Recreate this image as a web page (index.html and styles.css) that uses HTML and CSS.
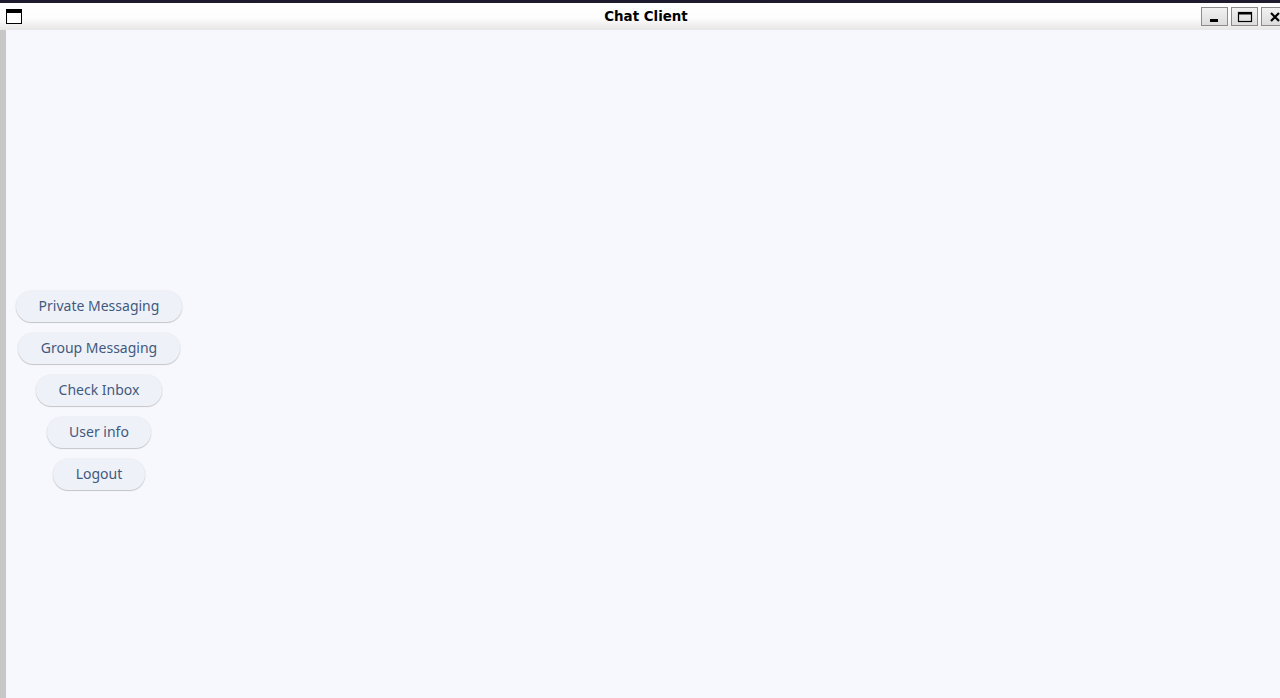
FILE: index.html
```html
<!DOCTYPE html>
<html>
<head>
<meta charset="utf-8">
<link rel="stylesheet" href="styles.css">
</head>
<body>
<div class="window">
  <div class="topline"></div>
  <div class="titlebar">
    <div class="winicon"></div>
    <div class="title">Chat Client</div>
    <div class="controls">
      <div class="ctl"><svg width="12" height="12" viewBox="0 0 12 12"><rect x="1" y="8" width="8" height="3" fill="#000"/></svg></div>
      <div class="ctl"><svg width="16" height="12" viewBox="0 0 16 12"><rect x="1.5" y="1.5" width="13" height="9" fill="none" stroke="#000" stroke-width="1.2"/><rect x="1" y="1" width="14" height="2.5" fill="#000"/></svg></div>
      <div class="ctl close"><svg width="12" height="12" viewBox="0 0 12 12"><path d="M2 2 L10 10 M10 2 L2 10" stroke="#000" stroke-width="2.2"/></svg></div>
    </div>
  </div>
  <div class="body">
    <div class="leftedge"></div>
    <div class="content">
      <nav class="menu">
        <button class="pill">Private Messaging</button>
        <button class="pill">Group Messaging</button>
        <button class="pill">Check Inbox</button>
        <button class="pill">User info</button>
        <button class="pill">Logout</button>
      </nav>
    </div>
  </div>
</div>
</body>
</html>
```
FILE: styles.css
```css
html, body {
  margin: 0;
  padding: 0;
  width: 1280px;
  height: 698px;
  overflow: hidden;
  background: #f7f8fd;
}
.window {
  display: flex;
  flex-direction: column;
  height: 698px;
}
.topline {
  height: 3px;
  background: #1e1b2e;
}
.titlebar {
  height: 27px;
  display: flex;
  align-items: center;
  position: relative;
  background: linear-gradient(#ffffff 0%, #fdfdfd 55%, #e6e6e6 100%);
  font-family: "DejaVu Sans", sans-serif;
}
.winicon {
  width: 14px;
  height: 10px;
  margin-left: 6px;
  border: 1px solid #000;
  border-top: 4px solid #000;
  background: #fff;
}
.title {
  position: absolute;
  left: 0;
  right: 0;
  top: 6px;
  text-align: center;
  padding-left: 12px;
  font-weight: bold;
  font-size: 13.4px;
  color: #000;
}
.controls {
  margin-left: auto;
  display: flex;
  gap: 3px;
  margin-right: -8px;
}
.ctl {
  width: 25px;
  height: 17px;
  border: 1px solid #8c8c8c;
  background: linear-gradient(#f2f2f2, #dcdcdc);
  display: flex;
  align-items: center;
  justify-content: center;
}
.body {
  flex: 1;
  display: flex;
}
.leftedge {
  width: 6px;
  background: #c7c7c7;
}
.content {
  flex: 1;
  background: #f7f8fd;
}
.menu {
  width: 186px;
  display: flex;
  flex-direction: column;
  align-items: center;
  gap: 11px;
  padding-top: 261px;
}
.pill {
  height: 31px;
  padding: 0 22.5px 2px;
  border: none;
  border-radius: 16px;
  background: #eff1f8;
  box-shadow: 0 1px 1px rgba(0,0,0,0.18), 0 0 0 1px rgba(0,0,0,0.03);
  font-family: "Noto Sans", "Open Sans", sans-serif;
  font-size: 14px;
  color: #3f5a7f;
  cursor: pointer;
}
```
